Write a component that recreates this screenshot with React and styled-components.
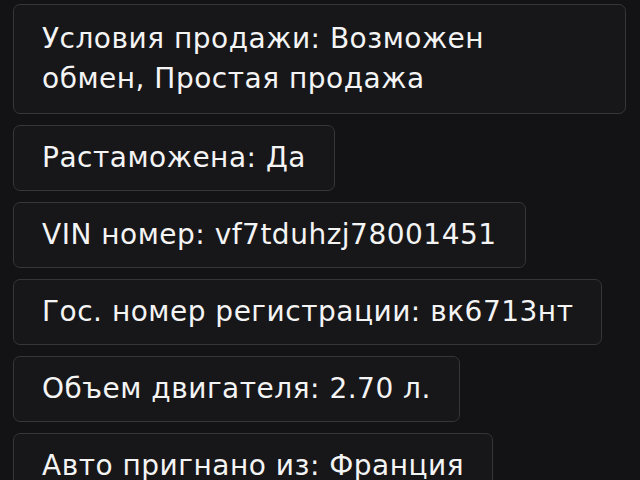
import styled, { createGlobalStyle } from "styled-components";

const GlobalStyle = createGlobalStyle`
	html, body {
		margin: 0;
		padding: 0;
		background: #131316;
		height: 100%;
		overflow: hidden;
	}
`;

const items = [
	"Условия продажи: Возможен\nобмен, Простая продажа",
	"Растаможена: Да",
	"VIN номер: vf7tduhzj78001451",
	"Гос. номер регистрации: вк6713нт",
	"Объем двигателя: 2.70 л.",
	"Авто пригнано из: Франция",
];

function App() {
	return (
		<>
			<GlobalStyle />
			<StyledList>
				{items.map((text, i) => (
					<StyledItem key={text} $full={i === 0}>
						{text}
					</StyledItem>
				))}
			</StyledList>
		</>
	);
}

export default App;

const StyledList = styled.div`
	display: flex;
	flex-direction: column;
	align-items: flex-start;
	gap: 11px;
	padding: 4px 14px 0 13px;

	font-family: "DejaVu Sans", Inter, sans-serif;
`;

const StyledItem = styled.div`
	max-width: 100%;
	align-self: ${(p) => (p.$full ? "stretch" : "flex-start")};
	box-sizing: border-box;
	padding: ${(p) => (p.$full ? "14px 28px" : "12px 28px")};

	background: #17171a;
	border: 1px solid #36363a;
	border-radius: 7px;

	font-size: 28px;
	font-weight: 400;
	letter-spacing: 0.5px;
	line-height: 40px;
	white-space: pre-line;
	color: #f4f4f4;
`;
